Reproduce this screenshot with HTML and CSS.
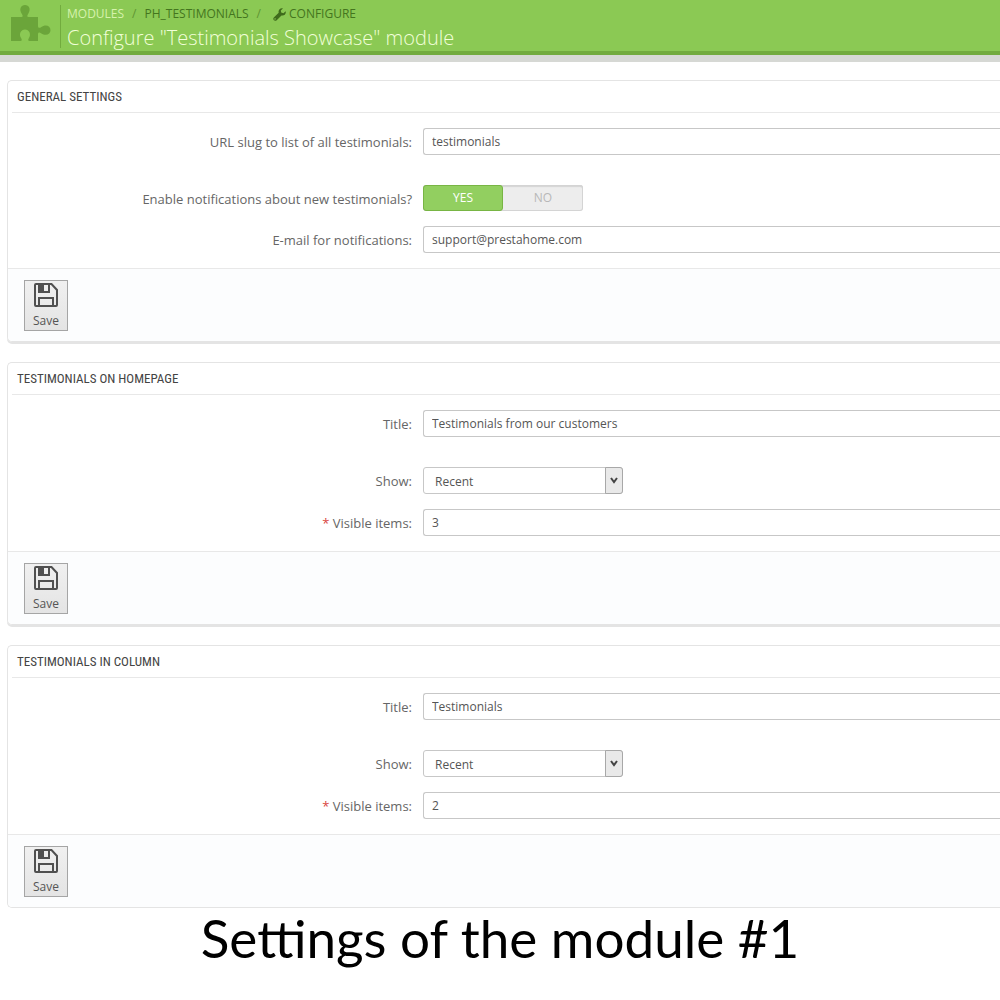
FILE: index.html
```html
<!DOCTYPE html>
<html lang="en">
<head>
    <meta charset="UTF-8">
    <meta name="viewport" content="width=device-width, initial-scale=1.0">
    <title>Configure "Testimonials Showcase" module</title>
    <link rel="stylesheet" href="styles.css">
</head>
<body>

<header class="page-head">
    <div class="page-icon">
        <svg viewBox="0 0 40 38" width="40" height="38">
            <path d="M0 12h10.500c1.500 0 1.500-1.500.5-2.800C7.500 4 10 0 14 0s6.500 4 3 9.200c-1 1.300-1 2.800.5 2.800H27v9c0 2 1.500 2.300 3 1.200 5-3.500 9.500-1 9.500 3s-4.500 6.500-9.500 3c-1.500-1.100-3-.8-3 1.200V36h-8.500c-1.500 0-1.500-1.500-.8-2.500 3-4.500.3-9-3.700-9s-6.700 4.500-3.700 9c.7 1 .7 2.500-.8 2.500H0z"/>
        </svg>
    </div>
    <div class="page-info">
        <nav class="breadcrumb">
            <a href="#" class="muted">MODULES</a>
            <span class="sep">/</span>
            <a href="#">PH_TESTIMONIALS</a>
            <span class="sep">/</span>
            <a href="#" class="with-icon">
                <svg viewBox="0 0 13 13" width="13" height="13">
                    <path d="M12.700 3.300c.7 2.700-1.800 4.900-4.200 4.100L3.700 12.200c-1.800 1.800-4.600-.8-2.900-2.700l4.900-4.700C4.900 2.200 7.200-.3 9.900.4L7.800 2.600l.4 2 2.200.6zM2.300 10.200a.7.7 0 1 0 .1 1.300.7.7 0 0 0-.1-1.300z"/>
                </svg>CONFIGURE</a>
        </nav>
        <h1>Configure "Testimonials Showcase" module</h1>
    </div>
</header>

<main class="content">

    <!-- General settings -->
    <form class="panel">
        <h2>GENERAL SETTINGS</h2>
        <div class="row row-first">
            <label for="slug">URL slug to list of all testimonials:</label>
            <input type="text" id="slug" value="testimonials">
        </div>
        <div class="row">
            <span class="label" id="notifyLabel">Enable notifications about new testimonials?</span>
            <div class="switch" role="radiogroup" aria-labelledby="notifyLabel">
                <input type="radio" name="notify" id="notifyOn" checked>
                <label for="notifyOn">YES</label>
                <input type="radio" name="notify" id="notifyOff">
                <label for="notifyOff">NO</label>
            </div>
        </div>
        <div class="row">
            <label for="email">E-mail for notifications:</label>
            <input type="text" id="email" value="support@prestahome.com">
        </div>
        <div class="panel-footer">
            <button type="button" class="save">
                <svg viewBox="0 0 24 24" width="24" height="24">
                    <path class="line" d="M2 1h15.500L23 7v15a1 1 0 0 1-1 1H2a1 1 0 0 1-1-1V2a1 1 0 0 1 1-1zM5 23v-8h14v8M5 1v8h10V1"/>
                    <path class="fill" d="M5 1h5v8H5z"/>
                </svg>
                Save
            </button>
        </div>
    </form>

    <!-- Homepage block -->
    <form class="panel">
        <h2>TESTIMONIALS ON HOMEPAGE</h2>
        <div class="row row-first">
            <label for="homeTitle">Title:</label>
            <input type="text" id="homeTitle" value="Testimonials from our customers">
        </div>
        <div class="row">
            <label for="homeShow">Show:</label>
            <div class="select">
                <select id="homeShow">
                    <option>Recent</option>
                    <option>Random</option>
                </select>
                <span class="arrow"><svg viewBox="0 0 8 7" width="8" height="7"><path d="M1 1l3 4 3-4"/></svg></span>
            </div>
        </div>
        <div class="row">
            <label for="homeItems"><span class="required">*</span> Visible items:</label>
            <input type="text" id="homeItems" value="3">
        </div>
        <div class="panel-footer">
            <button type="button" class="save">
                <svg viewBox="0 0 24 24" width="24" height="24">
                    <path class="line" d="M2 1h15.500L23 7v15a1 1 0 0 1-1 1H2a1 1 0 0 1-1-1V2a1 1 0 0 1 1-1zM5 23v-8h14v8M5 1v8h10V1"/>
                    <path class="fill" d="M5 1h5v8H5z"/>
                </svg>
                Save
            </button>
        </div>
    </form>

    <!-- Column block -->
    <form class="panel">
        <h2>TESTIMONIALS IN COLUMN</h2>
        <div class="row row-first">
            <label for="colTitle">Title:</label>
            <input type="text" id="colTitle" value="Testimonials">
        </div>
        <div class="row">
            <label for="colShow">Show:</label>
            <div class="select">
                <select id="colShow">
                    <option>Recent</option>
                    <option>Random</option>
                </select>
                <span class="arrow"><svg viewBox="0 0 8 7" width="8" height="7"><path d="M1 1l3 4 3-4"/></svg></span>
            </div>
        </div>
        <div class="row">
            <label for="colItems"><span class="required">*</span> Visible items:</label>
            <input type="text" id="colItems" value="2">
        </div>
        <div class="panel-footer">
            <button type="button" class="save">
                <svg viewBox="0 0 24 24" width="24" height="24">
                    <path class="line" d="M2 1h15.500L23 7v15a1 1 0 0 1-1 1H2a1 1 0 0 1-1-1V2a1 1 0 0 1 1-1zM5 23v-8h14v8M5 1v8h10V1"/>
                    <path class="fill" d="M5 1h5v8H5z"/>
                </svg>
                Save
            </button>
        </div>
    </form>

</main>

<p class="caption">Settings of the module #1</p>

</body>
</html>
```
FILE: styles.css
```css
* {
    box-sizing: border-box;
}

body {
    margin: 0;
    background-color: #fff;
    color: #666;
    font-family: "Open Sans", sans-serif;
    font-size: 13px;
}

/* Header */
.page-head {
    display: flex;
    height: 55px;
    padding: 5px 11px 0;
    background-color: #8bc954;
    border-bottom: 4px solid #72ab3e;
}

.page-icon {
    width: 50px;
    height: 43px;
    border-right: 1px solid #72ab3e;
}

.page-icon svg {
    display: block;
    fill: #6ba53a;
}

.page-info {
    padding-left: 6px;
}

.breadcrumb {
    display: flex;
    gap: 8px;
    font-size: 12px;
    line-height: 18px;
}

.breadcrumb a {
    color: #44751e;
    text-decoration: none;
}

.breadcrumb .muted {
    color: #d6f2ac;
}

.breadcrumb .sep {
    color: #5f9433;
}

.breadcrumb .with-icon {
    display: flex;
    align-items: center;
    gap: 3px;
    margin-left: 4px;
}

.breadcrumb svg {
    fill: #3f6b1c;
}

h1 {
    margin: 0;
    color: #f2ffd9;
    font-size: 20px;
    font-weight: 300;
    line-height: 30px;
}

/* Panels */
.content {
    padding: 18px 0 0 7px;
    border-top: 7px solid #d6d8d4;
}

.panel {
    margin-bottom: 20px;
    border: 1px solid #e4e4e4;
    border-right: 0;
    border-radius: 5px 0 0 5px;
    box-shadow: 0 2px 0 #e4e4e4;
}

.panel:last-child {
    margin-bottom: 0;
    box-shadow: none;
}

h2 {
    margin: 0 0 15px 4px;
    padding-left: 5px;
    border-bottom: 1px solid #e8e8e8;
    color: #444;
    font-family: "Ubuntu Condensed", "Roboto Condensed", "Open Sans Condensed Light", "Open Sans Condensed", sans-serif;
    font-size: 13px;
    font-weight: 400;
    line-height: 31px;
}

.row {
    display: flex;
    gap: 11px;
    margin-bottom: 15px;
}

.row-first {
    margin-bottom: 30px;
}

.row > label,
.row > .label {
    flex: 0 0 404px;
    padding-top: 3px;
    line-height: 23px;
    text-align: right;
}

.required {
    color: #d9453d;
}

.row > input {
    flex: 1;
    min-width: 0;
    height: 27px;
    padding: 0 8px;
    border: 1px solid #c7c7c7;
    border-right: 0;
    border-radius: 3px 0 0 3px;
    background-color: #fff;
    color: #555;
    font-family: inherit;
    font-size: 12px;
}

.switch {
    display: flex;
    width: 160px;
    height: 26px;
    border-radius: 3px;
    background-color: #ededed;
    box-shadow: inset 0 0 0 1px #d4d4d4, inset 0 2px 1px #d4d4d4;
}

.switch input {
    position: absolute;
    opacity: 0;
}

.switch label {
    flex: 0 0 50%;
    color: #b8b8b8;
    font-size: 12px;
    line-height: 26px;
    text-align: center;
}

.switch input:checked + label {
    border: 1px solid #78b544;
    border-radius: 3px;
    background-color: #92cf60;
    color: #fff;
    line-height: 24px;
}

.select {
    position: relative;
    width: 200px;
    height: 27px;
}

.select select {
    width: 100%;
    height: 100%;
    padding: 2px 12px 0 11px;
    border: 1px solid #c7c7c7;
    border-radius: 3px;
    background-color: #fff;
    color: #555;
    font-family: inherit;
    font-size: 12px;
    appearance: none;
}

.arrow {
    position: absolute;
    top: 0;
    right: 0;
    display: flex;
    align-items: center;
    justify-content: center;
    width: 18px;
    height: 27px;
    border: 1px solid #a8a8a8;
    border-radius: 0 3px 3px 0;
    background-color: #e9e9e9;
    pointer-events: none;
}

.arrow svg {
    fill: none;
    stroke: #444;
    stroke-width: 2;
}

.panel-footer {
    padding: 11px 16px 10px;
    border-top: 1px solid #e8e8e8;
    border-radius: 0 0 0 5px;
    background-color: #fcfdfe;
}

.save {
    display: flex;
    flex-direction: column;
    align-items: center;
    gap: 4px;
    width: 44px;
    height: 51px;
    padding: 2px 0 0;
    border: 1px solid #a5a5a5;
    background: linear-gradient(#f0f0f0, #e4e4e4);
    color: #555;
    font-family: inherit;
    font-size: 12px;
    line-height: 19px;
}

.save svg {
    flex-shrink: 0;
}

.save .line {
    fill: none;
    stroke: #505050;
    stroke-width: 2;
}

.save .fill {
    fill: #505050;
}

.caption {
    margin: 0;
    color: #000;
    font-family: Lato, sans-serif;
    font-size: 53px;
    line-height: 60px;
    text-align: center;
}
```
